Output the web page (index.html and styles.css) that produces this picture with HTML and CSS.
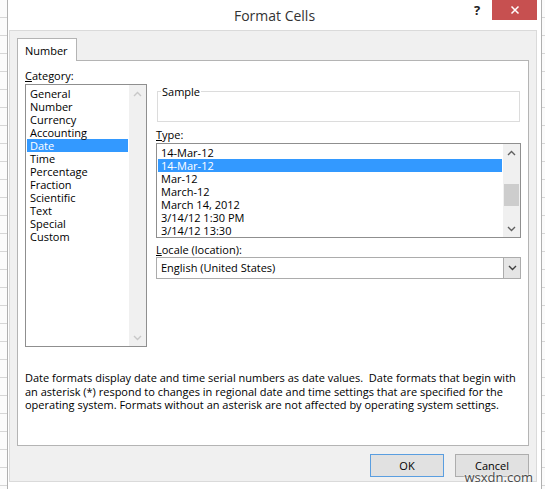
FILE: index.html
```html
<!DOCTYPE html>
<html lang="en">
<head>
<meta charset="utf-8">
<title>Format Cells</title>
<link rel="stylesheet" href="styles.css">
</head>
<body>
<div class="screen">
  <div class="strip strip-left"></div>
  <div class="dialog">
    <div class="titlebar">
      <div class="title">Format Cells</div>
      <div class="controls">
        <div class="help">?</div>
        <div class="close">
          <svg width="10" height="10" viewBox="0 0 10 10"><path d="M1.5 1.5L8.5 8.5M8.5 1.5L1.5 8.5" stroke="#fff" stroke-width="1.5" fill="none"/></svg>
        </div>
      </div>
    </div>
    <div class="panel">
      <div class="tabs"><div class="tab">Number</div></div>
      <div class="page">
        <div class="cols">
          <div class="col-left">
            <div class="label"><u>C</u>ategory:</div>
            <div class="listbox cat-list">
              <div class="items">
                <div class="item">General</div>
                <div class="item">Number</div>
                <div class="item">Currency</div>
                <div class="item">Accounting</div>
                <div class="item selected">Date</div>
                <div class="item">Time</div>
                <div class="item">Percentage</div>
                <div class="item">Fraction</div>
                <div class="item">Scientific</div>
                <div class="item">Text</div>
                <div class="item">Special</div>
                <div class="item">Custom</div>
              </div>
              <div class="vscroll disabled">
                <div class="sbtn"><svg width="9" height="6" viewBox="0 0 9 6"><path d="M1 5L4.5 1.5L8 5" fill="none" stroke="#c8c8c8" stroke-width="1.4"/></svg></div>
                <div class="track"></div>
                <div class="sbtn"><svg width="9" height="6" viewBox="0 0 9 6"><path d="M1 1L4.5 4.5L8 1" fill="none" stroke="#c8c8c8" stroke-width="1.4"/></svg></div>
              </div>
            </div>
          </div>
          <div class="col-right">
            <fieldset class="sample">
              <legend>Sample</legend>
            </fieldset>
            <div class="label type-label"><u>T</u>ype:</div>
            <div class="listbox type-list">
              <div class="items">
                <div class="item">14-Mar-12</div>
                <div class="item selected">14-Mar-12</div>
                <div class="item">Mar-12</div>
                <div class="item">March-12</div>
                <div class="item">March 14, 2012</div>
                <div class="item">3/14/12 1:30 PM</div>
                <div class="item">3/14/12 13:30</div>
              </div>
              <div class="vscroll">
                <div class="sbtn"><svg width="9" height="6" viewBox="0 0 9 6"><path d="M1 5L4.5 1.5L8 5" fill="none" stroke="#606060" stroke-width="1.4"/></svg></div>
                <div class="track"><div class="thumb"></div></div>
                <div class="sbtn"><svg width="9" height="6" viewBox="0 0 9 6"><path d="M1 1L4.5 4.5L8 1" fill="none" stroke="#606060" stroke-width="1.4"/></svg></div>
              </div>
            </div>
            <div class="label locale-label"><u>L</u>ocale (location):</div>
            <div class="combo">
              <div class="combo-text">English (United States)</div>
              <div class="combo-btn"><svg width="9" height="6" viewBox="0 0 9 6"><path d="M1 1L4.5 4.5L8 1" fill="none" stroke="#404040" stroke-width="1.4"/></svg></div>
            </div>
          </div>
        </div>
        <p class="desc">Date formats display date and time serial numbers as date values.&nbsp; Date formats that begin with<br>an asterisk (*) respond to changes in regional date and time settings that are specified for the<br>operating system. Formats without an asterisk are not affected by operating system settings.</p>
      </div>
      <div class="buttons">
        <button class="btn btn-default">OK</button>
        <button class="btn">Cancel</button>
      </div>
    </div>
  </div>
  <div class="strip strip-right"></div>
  <div class="watermark">wsxdn.com</div>
</div>
</body>
</html>
```
FILE: styles.css
```css
* { box-sizing: border-box; }
html, body { margin: 0; padding: 0; }
body {
  width: 545px;
  height: 489px;
  overflow: hidden;
  background: #fff;
  font-family: "Open Sans", "Noto Sans", sans-serif;
  font-size: 11px;
  color: #000;
}
.screen {
  position: relative;
  display: flex;
  height: 489px;
}
.strip {
  flex: none;
  background: repeating-linear-gradient(to bottom, #fbfbfb 0 17px, #d6d6d6 17px 18px);
}
.strip-left { width: 7px; }
.strip-right { width: 3px; }

.dialog {
  flex: none;
  width: 535px;
  background: #fff;
  border-left: 1px solid #b0b0b0;
  border-right: 1px solid #b0b0b0;
  display: flex;
  flex-direction: column;
}
.titlebar {
  height: 30px;
  display: grid;
  grid-template-columns: 1fr auto 1fr;
}
.title {
  grid-column: 2;
  align-self: center;
  font-size: 14px;
  color: #333;
  line-height: 20px;
  padding-top: 1px;
}
.controls {
  grid-column: 3;
  display: flex;
  justify-content: flex-end;
  align-items: flex-start;
}
.help {
  width: 14px;
  margin-top: 1px;
  margin-right: 8px;
  font-size: 13px;
  font-weight: 700;
  color: #222;
  text-align: center;
  line-height: 18px;
}
.close {
  width: 45px;
  height: 20px;
  margin-right: 4px;
  background: #c75050;
  display: flex;
  align-items: center;
  justify-content: center;
}

.panel {
  margin: 0 4px 0 1px;
  height: 452px;
  border: 1px solid #dadada;
  background: #f0f0f0;
  padding: 7px 7px 0 7px;
  display: flex;
  flex-direction: column;
}
.tabs {
  height: 22px;
  display: flex;
}
.tab {
  position: relative;
  z-index: 1;
  width: 60px;
  height: 23px;
  background: #fff;
  border: 1px solid #b4b4b4;
  border-bottom: none;
  padding: 2px 0 0 7px;
  line-height: 20px;
}
.page {
  height: 386px;
  background: #fff;
  border: 1px solid #b4b4b4;
  padding: 8px 7px 0 7px;
  display: flex;
  flex-direction: column;
}
.cols {
  display: flex;
  gap: 9px;
}
.col-left {
  width: 122px;
  flex: none;
}
.col-right {
  width: 365px;
  flex: none;
  padding-top: 16px;
}
.label {
  line-height: 13px;
  height: 13px;
  white-space: nowrap;
}
.col-left .label { margin-bottom: 2px; }

.listbox {
  display: flex;
  border: 1px solid #8f8f8f;
  background: #fff;
}
.cat-list { height: 263px; }
.type-list { height: 95px; margin-top: 2px; }
.items {
  flex: 1;
  min-width: 0;
  padding: 2px 1px 0 1px;
}
.item {
  height: 13px;
  line-height: 13px;
  padding-left: 3px;
  white-space: nowrap;
}
.item.selected {
  background: #3399ff;
  color: #fff;
}
.vscroll {
  width: 17px;
  flex: none;
  background: #f0f0f0;
  display: flex;
  flex-direction: column;
}
.sbtn {
  height: 17px;
  flex: none;
  display: flex;
  align-items: center;
  justify-content: center;
}
.track { flex: 1; }
.thumb {
  margin: 23px 0 0 1px;
  width: 15px;
  height: 22px;
  background: #cdcdcd;
}

.sample {
  margin: 0 1px;
  padding: 0;
  min-width: 0;
  height: 37px;
  border: 1px solid #dcdcdc;
}
.sample legend {
  margin-left: 3px;
  padding: 0 1px;
  line-height: 13px;
}
.type-label { margin-top: 6px; }
.locale-label { margin-top: 5px; }
.combo {
  margin-top: 1px;
  height: 22px;
  border: 1px solid #acacac;
  background: #fff;
  display: flex;
  align-items: stretch;
}
.combo-text {
  flex: 1;
  padding-left: 4px;
  line-height: 20px;
}
.combo-btn {
  width: 17px;
  flex: none;
  background: #e5e5e5;
  border-left: 1px solid #acacac;
  display: flex;
  align-items: center;
  justify-content: center;
}

.desc {
  margin: 24px 0 0 0;
  line-height: 13.5px;
  white-space: nowrap;
}

.buttons {
  margin-top: 8px;
  display: flex;
  justify-content: flex-end;
  gap: 11px;
}
.btn {
  width: 74px;
  height: 23px;
  padding: 0;
  background: #e1e1e1;
  border: 1px solid #adadad;
  font-family: inherit;
  font-size: 11px;
  color: #000;
}
.btn-default { border-color: #5a9ee0; }

.watermark {
  position: absolute;
  right: 12px;
  bottom: 3px;
  font-size: 13px;
  color: #4a4a4a;
  text-shadow: 0 0 2px #fff, 0 0 2px #fff;
}
```
